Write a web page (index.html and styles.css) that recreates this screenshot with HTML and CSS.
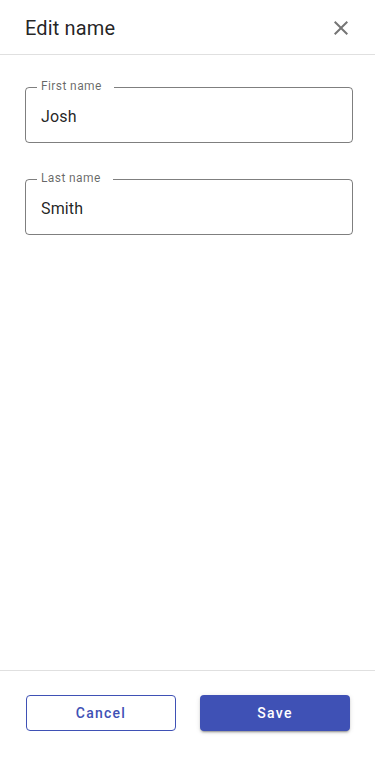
FILE: index.html
```html
<!DOCTYPE html>
<html lang="en">
<head>
<meta charset="utf-8">
<meta name="viewport" content="width=device-width, initial-scale=1">
<title>Edit name</title>
<link rel="stylesheet" href="styles.css">
</head>
<body>
<div class="dialog">
  <header class="header">
    <h1 class="title">Edit name</h1>
    <button class="close" aria-label="Close">
      <svg viewBox="0 0 24 24" width="24" height="24"><path d="M19 6.41 17.59 5 12 10.59 6.41 5 5 6.41 10.59 12 5 17.59 6.41 19 12 13.41 17.59 19 19 17.59 13.41 12z" fill="currentColor"/></svg>
    </button>
  </header>
  <main class="content">
    <div class="field">
      <span class="label">First name</span>
      <div class="value">Josh</div>
    </div>
    <div class="field">
      <span class="label">Last name</span>
      <div class="value">Smith</div>
    </div>
  </main>
  <footer class="footer">
    <button class="btn btn-outline">Cancel</button>
    <button class="btn btn-filled">Save</button>
  </footer>
</div>
</body>
</html>
```
FILE: styles.css
```css
* { box-sizing: border-box; }
html, body { margin: 0; padding: 0; background: #fff; }
body { font-family: Roboto, "Noto Sans", Arial, sans-serif; color: rgba(0,0,0,0.87); }
.dialog { display: flex; flex-direction: column; height: 759px; }
.header {
  height: 55px;
  display: flex;
  align-items: center;
  justify-content: space-between;
  padding: 1px 22px 0 25px;
  border-bottom: 1px solid #e0e0e0;
  flex: none;
}
.title { margin: 0; font-size: 20px; font-weight: 400; line-height: 24px; letter-spacing: 0.15px; color: rgba(0,0,0,0.87); }
.close {
  border: 0; background: none; padding: 0; margin: 0;
  width: 24px; height: 24px; color: #757575; display: flex;
}
.content {
  flex: 1;
  padding: 32px 22px 0 25px;
  display: flex;
  flex-direction: column;
  gap: 36px;
}
.field {
  position: relative;
  height: 56px;
  border: 1px solid rgba(0,0,0,0.5);
  border-radius: 4px;
  padding: 3px 15px 0;
}
.label {
  position: absolute;
  top: -10px;
  left: 11px;
  padding: 0 12px 0 4px;
  background: #fff;
  font-size: 12px;
  line-height: 16px;
  letter-spacing: 0.4px;
  color: rgba(0,0,0,0.6);
}
.value { font-size: 16px; line-height: 51px; letter-spacing: 0.15px; color: rgba(0,0,0,0.87); }
.footer {
  flex: none;
  border-top: 1px solid #e0e0e0;
  height: 89px;
  padding: 24px 25px 0 26px;
  display: flex;
  gap: 24px;
  align-items: flex-start;
}
.btn {
  width: 150px;
  height: 36px;
  border-radius: 4px;
  font-family: Roboto, "Noto Sans", Arial, sans-serif;
  font-size: 14px;
  font-weight: 500;
  letter-spacing: 1.25px;
  cursor: pointer;
  padding: 0;
}
.btn-outline { background: #fff; color: #3f51b5; border: 1px solid #3f51b5; }
.btn-filled {
  background: #3f51b5; color: #fff; border: 0;
  box-shadow: 0 3px 1px -2px rgba(0,0,0,0.2), 0 2px 2px 0 rgba(0,0,0,0.14), 0 1px 5px 0 rgba(0,0,0,0.12);
}
```
